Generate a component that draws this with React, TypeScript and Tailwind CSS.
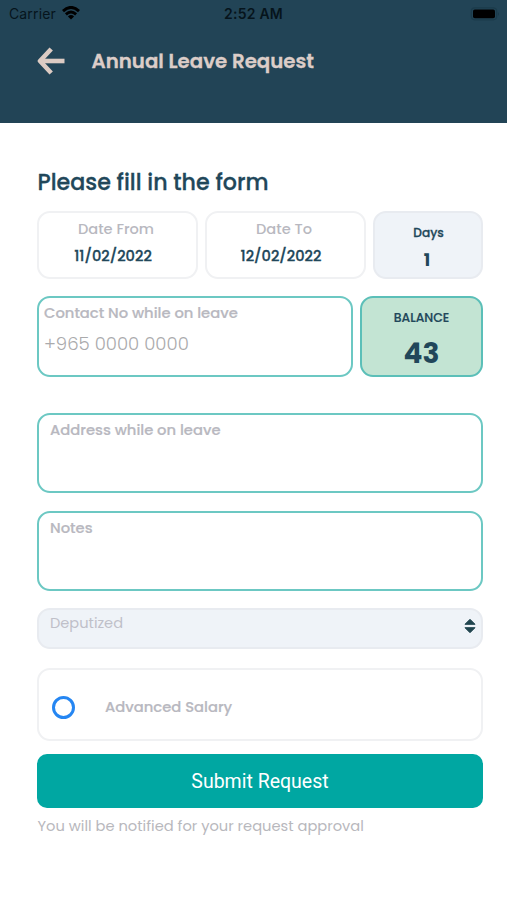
import React from 'react';

function StatusBar() {
  return (
    <div className="flex h-7 items-center justify-between pl-[9px] pr-[7px] font-['Inter',sans-serif] text-[#06141c]">
      <div className="flex w-[100px] items-center gap-[6px]">
        <span className="text-[14px] leading-7 tracking-[0.01em]">Carrier</span>
        <svg className="-mt-[2px]" width="18" height="14" viewBox="0 0 18 14" fill="none" stroke="#000" strokeWidth="2.9">
          <path d="M1 5.1Q9-2.3 17 5.1" />
          <path d="M3.9 8.3Q9 3.7 14.1 8.3" />
          <path d="M9 13.5L5.9 10.4Q9 7.8 12.1 10.4Z" fill="#000" stroke="none" />
        </svg>
      </div>
      <span className="mr-[2px] text-[14px] font-semibold leading-7 tracking-[0.015em]">2:52 AM</span>
      <div className="flex w-[100px] items-center justify-end">
        <svg className="-mt-px" width="30" height="14" viewBox="0 0 30 14">
          <rect x="1.3" y="0.8" width="25.4" height="12" rx="3.5" fill="none" stroke="#1b3b4b" strokeWidth="1.2" />
          <rect x="3" y="2.5" width="22" height="8.8" rx="1.8" fill="#000" />
          <path d="M28 5Q30 7 28 9Z" fill="#1b3b4b" />
        </svg>
      </div>
    </div>
  );
}

function DateField({ label, value }: { label: string; value: string }) {
  return (
    <div className="flex w-[161px] flex-col items-center rounded-[13px] border-2 border-[#f0f1f3] pt-[3px]">
      <span className="mr-[3px] text-[14.6px] font-medium leading-[26px] text-[#b8b8c0]">{label}</span>
      <span className="mr-[9px] text-[14.6px] font-medium leading-[29px] text-[#21475a] [-webkit-text-stroke:0.3px]">{value}</span>
    </div>
  );
}

function TextArea({ label }: { label: string }) {
  return (
    <div className="h-20 rounded-[13px] border-2 border-[#6cc8c3] px-[11px] pt-[3px]">
      <span className="text-[14.75px] font-medium leading-6 text-[#b8b8c0] [-webkit-text-stroke:0.2px]">{label}</span>
    </div>
  );
}

export default function App() {
  return (
    <div className="h-[900px] w-[507px] overflow-hidden whitespace-nowrap bg-white font-['Poppins','Inter',sans-serif]">
      <header className="h-[123px] bg-[#224456]">
        <StatusBar />
        <div className="flex h-[66px] items-center pl-[37px]">
          <svg width="28" height="28" viewBox="0 0 28 28" fill="none" stroke="#dccbc3" strokeWidth="4.6">
            <path d="M14.2 2L3 14L14.2 26" strokeLinejoin="round" />
            <path d="M3.5 14H27.5" />
          </svg>
          <h1 className="ml-[26.5px] text-[19.8px] font-semibold leading-7 text-[#dccdc8] [-webkit-text-stroke:0.3px]">Annual Leave Request</h1>
        </div>
      </header>

      <main className="pl-[37px] pr-6">
        <h2 className="pl-[0.5px] pt-[45px] text-[22.2px] font-medium leading-[30px] text-[#21475a] [-webkit-text-stroke:0.3px]">Please fill in the form</h2>

        <div className="mt-[13px] flex h-[68px] gap-[7px]">
          <DateField label="Date From" value="11/02/2022" />
          <DateField label="Date To" value="12/02/2022" />
          <div className="flex flex-1 flex-col items-center rounded-[13px] border-2 border-[#e8ebf0] bg-[#eff3f8] pt-[9px] text-[#21475a]">
            <span className="ml-px text-[12.2px] font-medium leading-[22px] [-webkit-text-stroke:0.3px]">Days</span>
            <span className="mr-[2px] text-[17px] font-bold leading-[32px]">1</span>
          </div>
        </div>

        <div className="mt-[17px] flex h-[81px] gap-[7px]">
          <div className="flex w-[316px] flex-col rounded-[13px] border-2 border-[#6cc8c3] pl-[5px] pt-[3px]">
            <span className="text-[14.75px] font-medium leading-[24px] text-[#b8b8c0] [-webkit-text-stroke:0.2px]">Contact No while on leave</span>
            <span className="text-[18.1px] font-light leading-[37px] text-[#aaaaac]">+965 0000 0000</span>
          </div>
          <div className="flex flex-1 flex-col items-center rounded-[13px] border-2 border-[#5bbfb8] bg-[#c3e4d3] pt-2 text-[#21475a]">
            <span className="text-[12.4px] font-medium leading-[24px] [-webkit-text-stroke:0.2px]">BALANCE</span>
            <span className="text-[28px] font-bold leading-[47px]">43</span>
          </div>
        </div>

        <div className="mt-9 flex flex-col gap-[18px]">
          <TextArea label="Address while on leave" />
          <TextArea label="Notes" />
        </div>

        <div className="mt-[17px] flex h-[41px] items-start justify-between rounded-[13px] border-2 border-[#e8ebf0] bg-[#eff3f8] pl-[11px] pr-[5px]">
          <span className="text-[14.6px] leading-[26px] text-[#bfc0c9]">Deputized</span>
          <svg className="mt-[8px]" width="12" height="16" viewBox="0 0 12 16" fill="#21454f" stroke="#21454f" strokeLinejoin="round">
            <path d="M6 1.3L11 6.3H1Z" />
            <path d="M6 14.7L11 9.7H1Z" />
          </svg>
        </div>

        <div className="mt-[19px] flex h-[73px] items-center rounded-[13px] border-2 border-[#f0f1f3] pl-[13px] pt-[5px]">
          <span className="size-[23px] rounded-full border-[3px] border-[#2586f2]" />
          <span className="ml-[30px] text-[14.75px] font-medium leading-6 text-[#b8b8c0] [-webkit-text-stroke:0.2px]">Advanced Salary</span>
        </div>

        <button className="mt-[13px] block h-[54px] w-full rounded-[10px] bg-[#00a7a2] pt-px font-['Roboto',sans-serif] text-[19.5px] text-white">
          Submit Request
        </button>
        <p className="mt-[6px] pl-[0.5px] text-[14.68px] leading-6 text-[#b8b8bd]">You will be notified for your request approval</p>
      </main>
    </div>
  );
}
